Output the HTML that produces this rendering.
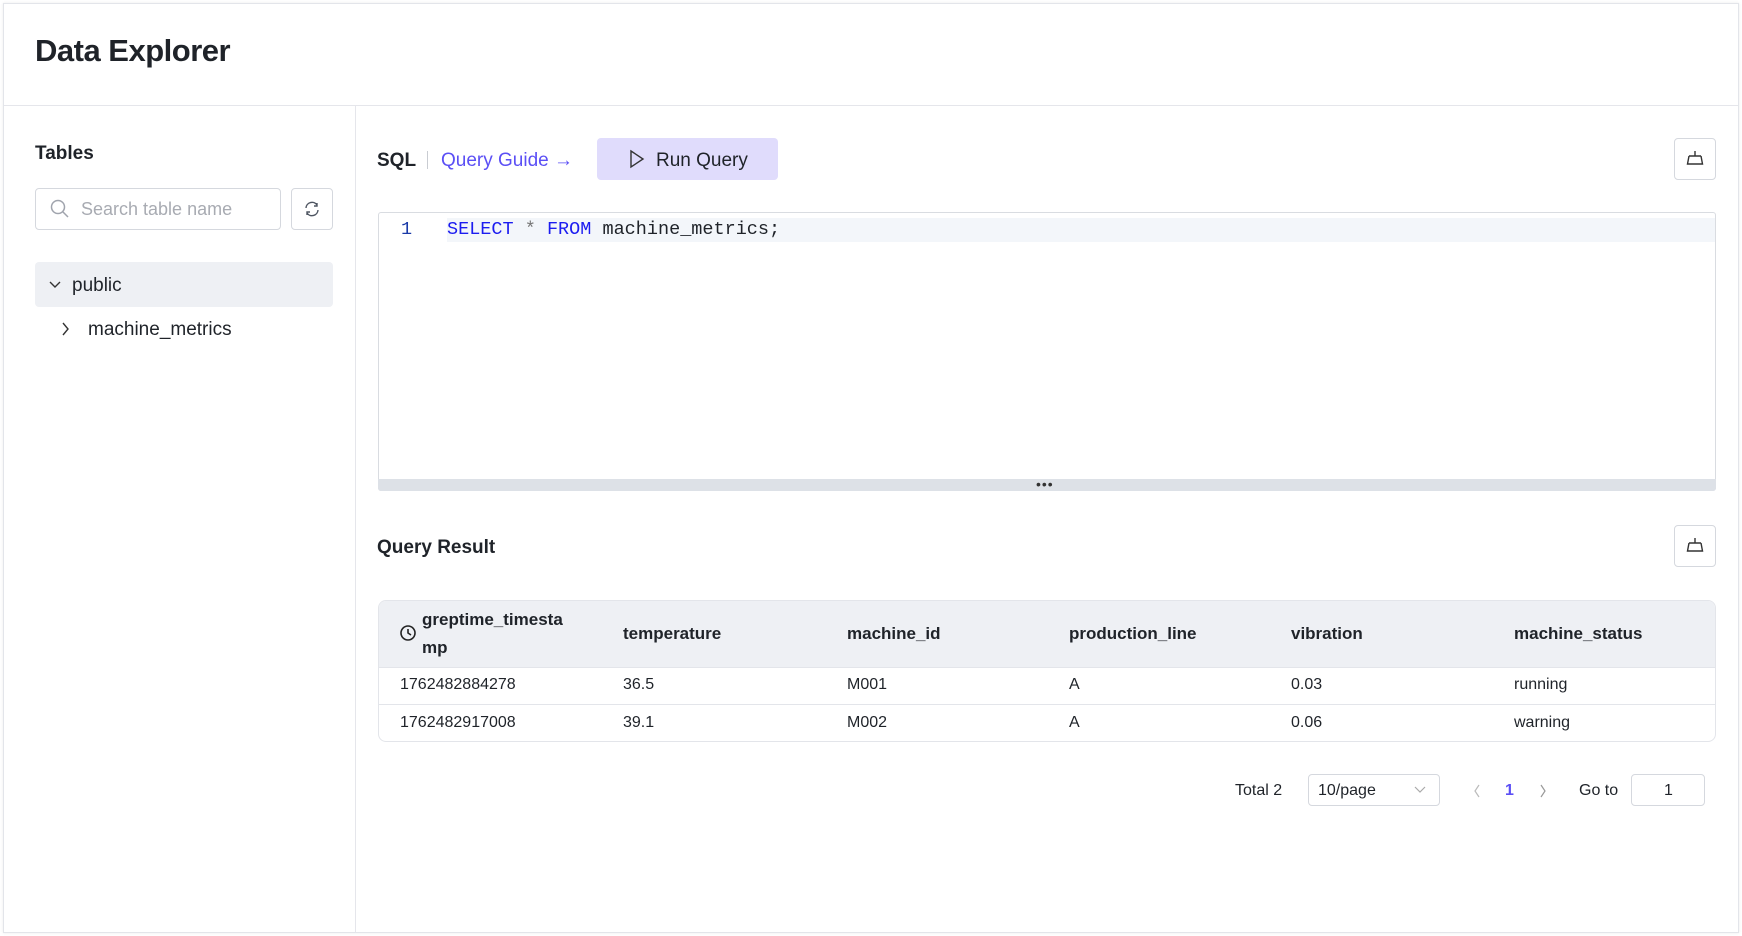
<!DOCTYPE html>
<html><head><meta charset="utf-8"><style>
*{box-sizing:border-box;margin:0;padding:0}
body{width:1742px;height:936px;background:#fff;font-family:"Liberation Sans",sans-serif;color:#1f2329;position:relative;overflow:hidden}
.frame{position:absolute;left:3px;top:3px;width:1736px;height:930px;border:1px solid #e3e5ea;box-shadow:0 0 3px rgba(0,0,0,.08)}
.a{position:absolute}
.title{left:35px;top:33px;font-size:31px;font-weight:bold;letter-spacing:-.5px}
.hline{left:4px;top:105px;width:1734px;height:1px;background:#e5e6eb}
.vline{left:355px;top:106px;width:1px;height:826px;background:#e5e6eb}
.btn{border:1px solid #d5d8de;border-radius:4px;background:#fff}
.th{font-weight:bold;font-size:17px}
.cell{position:absolute;font-size:16px}
</style></head><body>
<div class="frame"></div>
<div class="a title">Data Explorer</div>
<div class="a hline"></div>
<div class="a vline"></div>

<div class="a" style="left:35px;top:143px;font-size:19px;font-weight:bold">Tables</div>
<div class="a btn" style="left:35px;top:188px;width:246px;height:42px"></div>
<svg class="a" style="left:49px;top:198px" width="22" height="22" viewBox="0 0 22 22" fill="none" stroke="#a0a4ad" stroke-width="1.5"><circle cx="9" cy="9" r="6.5"/><path d="M14 14l5 5"/></svg>
<div class="a" style="left:81px;top:199px;font-size:18px;color:#a8abb2">Search table name</div>
<div class="a btn" style="left:291px;top:188px;width:42px;height:42px"></div>
<svg class="a" style="left:303px;top:200px" width="18" height="18" viewBox="0 0 18 18" fill="none" stroke="#4e5561" stroke-width="1.4"><path d="M3 8a6 6 0 0 1 11-3M14 3v3h-3M15 10a6 6 0 0 1-11 3M4 15v-3h3"/></svg>
<div class="a" style="left:35px;top:262px;width:298px;height:45px;background:#eef0f4;border-radius:4px"></div>
<svg class="a" style="left:48px;top:279px" width="14" height="12" viewBox="0 0 14 12" fill="none" stroke="#333" stroke-width="1.4"><path d="M2 3l5 5 5-5"/></svg>
<div class="a" style="left:72px;top:275px;font-size:19px">public</div>
<svg class="a" style="left:60px;top:321px" width="12" height="16" viewBox="0 0 12 16" fill="none" stroke="#333" stroke-width="1.4"><path d="M3 2l5 6-5 6"/></svg>
<div class="a" style="left:88px;top:319px;font-size:19px">machine_metrics</div>

<div class="a" style="left:377px;top:150px;font-size:19px;font-weight:bold">SQL</div>
<div class="a" style="left:427px;top:151px;width:1px;height:18px;background:#c9ccd2"></div>
<div class="a" style="left:441px;top:150px;font-size:19px;color:#5b4ff5">Query Guide →</div>
<div class="a" style="left:597px;top:138px;width:181px;height:42px;background:#e0dcfc;border-radius:4px"></div>
<svg class="a" style="left:628px;top:149px" width="18" height="20" viewBox="0 0 18 20" fill="none" stroke="#333" stroke-width="1.4"><path d="M3 2l12 8-12 8z"/></svg>
<div class="a" style="left:656px;top:150px;font-size:19px">Run Query</div>
<div class="a btn" style="left:1674px;top:138px;width:42px;height:42px"></div>
<svg class="a" style="left:1683px;top:147px" width="24" height="24" viewBox="0 0 24 24" fill="none" stroke="#333" stroke-width="1.4"><path d="M12 4v5M6 9h12M6 9l-1.5 8h15L18 9"/></svg>

<div class="a" style="left:378px;top:212px;width:1338px;height:279px;border:1px solid #d9dce1;border-radius:3px"></div>
<div class="a" style="left:447px;top:218px;width:1268px;height:24px;background:#f3f6fa"></div>
<div class="a" style="left:401px;top:219px;font-family:'Liberation Mono',monospace;font-size:18.5px;color:#1a3aa8">1</div>
<div class="a" style="left:447px;top:219px;font-family:'Liberation Mono',monospace;font-size:18.5px;white-space:pre"><span style="color:#1c1cf0">SELECT</span> <span style="color:#777">*</span> <span style="color:#1c1cf0">FROM</span> machine_metrics;</div>
<div class="a" style="left:378px;top:479px;width:1338px;height:12px;background:#dde1e7;border-radius:0 0 3px 3px"></div>
<div class="a" style="left:1036px;top:476px;font-size:14px;color:#333;letter-spacing:1px">•••</div>

<div class="a" style="left:377px;top:537px;font-size:19px;font-weight:bold">Query Result</div>
<div class="a btn" style="left:1674px;top:525px;width:42px;height:42px"></div>
<svg class="a" style="left:1683px;top:534px" width="24" height="24" viewBox="0 0 24 24" fill="none" stroke="#333" stroke-width="1.4"><path d="M12 4v5M6 9h12M6 9l-1.5 8h15L18 9"/></svg>

<div class="a" style="left:378px;top:600px;width:1338px;height:142px;border:1px solid #e3e5ea;border-radius:8px;overflow:hidden">
<div style="height:67px;background:#eef0f4;border-bottom:1px solid #e3e5ea"></div>
<div style="height:37px;border-bottom:1px solid #e3e5ea"></div>
</div>
<svg class="a" style="left:399px;top:624px" width="18" height="18" viewBox="0 0 18 18" fill="none" stroke="#222" stroke-width="1.6"><circle cx="9" cy="9" r="7"/><path d="M9 5v4l3 2"/></svg>
<div class="a th" style="left:422px;top:606px;line-height:28px">greptime_timesta<br>mp</div>
<div class="a th" style="left:623px;top:624px">temperature</div>
<div class="a th" style="left:847px;top:624px">machine_id</div>
<div class="a th" style="left:1069px;top:624px">production_line</div>
<div class="a th" style="left:1291px;top:624px">vibration</div>
<div class="a th" style="left:1514px;top:624px">machine_status</div>
<div class="cell" style="left:400px;top:676px">1762482884278</div>
<div class="cell" style="left:623px;top:676px">36.5</div>
<div class="cell" style="left:847px;top:676px">M001</div>
<div class="cell" style="left:1069px;top:676px">A</div>
<div class="cell" style="left:1291px;top:676px">0.03</div>
<div class="cell" style="left:1514px;top:676px">running</div>
<div class="cell" style="left:400px;top:714px">1762482917008</div>
<div class="cell" style="left:623px;top:714px">39.1</div>
<div class="cell" style="left:847px;top:714px">M002</div>
<div class="cell" style="left:1069px;top:714px">A</div>
<div class="cell" style="left:1291px;top:714px">0.06</div>
<div class="cell" style="left:1514px;top:714px">warning</div>

<div class="cell" style="left:1235px;top:782px">Total 2</div>
<div class="a btn" style="left:1308px;top:774px;width:132px;height:32px"></div>
<div class="cell" style="left:1318px;top:782px">10/page</div>
<svg class="a" style="left:1413px;top:785px" width="14" height="10" viewBox="0 0 14 10" fill="none" stroke="#aaa" stroke-width="1.2"><path d="M2 2l5 5 5-5"/></svg>
<svg class="a" style="left:1472px;top:783px" width="10" height="16" viewBox="0 0 10 16" fill="none" stroke="#bbb" stroke-width="1.2"><path d="M7 2L3 8l4 6"/></svg>
<div class="cell" style="left:1505px;top:782px;color:#5b4ff5;font-weight:bold">1</div>
<svg class="a" style="left:1538px;top:783px" width="10" height="16" viewBox="0 0 10 16" fill="none" stroke="#999" stroke-width="1.2"><path d="M3 2l4 6-4 6"/></svg>
<div class="cell" style="left:1579px;top:782px">Go to</div>
<div class="a btn" style="left:1631px;top:774px;width:74px;height:32px"></div>
<div class="cell" style="left:1664px;top:782px">1</div>
</body></html>
